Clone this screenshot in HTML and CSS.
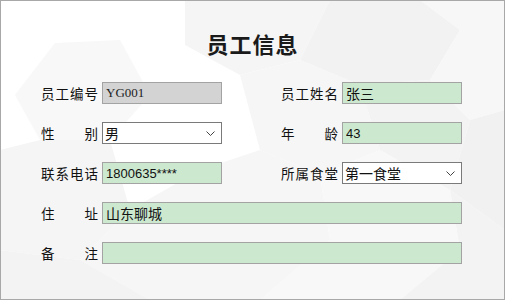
FILE: index.html
```html
<html>
<head>
    <link rel="stylesheet" href="styles.css">
</head>

<body>
    <div class="window">
        <!-- faint hexagon backdrop -->
        <svg class="backdrop" width="505" height="300" viewBox="0 0 505 300">
            <polygon points="185,0 330,0 300,60 240,75 185,45" fill="#f5f5f5" />
            <polygon points="330,0 420,0 460,30 430,80 360,85 300,60" fill="#f2f2f2" />
            <polygon points="420,0 505,0 505,110 470,120 430,80 460,30" fill="#f7f7f7" />
            <polygon points="300,60 360,85 380,150 320,175 260,150 240,75" fill="#f6f6f6" />
            <polygon points="360,85 430,80 470,120 450,190 380,150" fill="#f3f3f3" />
            <polygon points="470,120 505,110 505,230 450,190" fill="#f1f1f1" />
            <polygon points="55,43 120,40 150,95 110,140 40,140 15,95" fill="#f8f8f8" />
            <polygon points="0,150 40,140 110,140 130,210 80,260 0,250" fill="#f5f5f5" />
            <polygon points="130,210 200,170 260,150 320,175 330,240 260,300 150,300 80,260" fill="#f6f6f6" />
            <polygon points="320,175 380,150 450,190 460,250 400,300 260,300 330,240" fill="#f8f8f8" />
            <polygon points="450,190 505,230 505,300 400,300 460,250" fill="#f3f3f3" />
            <polygon points="0,250 80,260 150,300 0,300" fill="#f3f3f3" />
        </svg>

        <h1 class="title">员工信息</h1>

        <div class="form">
            <label class="field-label">员工编号</label>
            <input class="box box-readonly box-latin-serif" type="text" value="YG001" readonly />

            <label class="field-label">员工姓名</label>
            <input class="box" type="text" value="张三" />

            <label class="field-label">性别</label>
            <div class="select-wrap">
                <select class="pick">
                    <option>男</option>
                    <option>女</option>
                </select>
                <svg class="chevron" width="9" height="5" viewBox="0 0 9 5">
                    <polyline points="0.5,0.5 4.5,4.5 8.5,0.5" fill="none" stroke="#444" stroke-width="1" />
                </svg>
            </div>

            <label class="field-label">年龄</label>
            <input class="box box-latin" type="text" value="43" />

            <label class="field-label">联系电话</label>
            <input class="box box-latin" type="text" value="1800635****" />

            <label class="field-label">所属食堂</label>
            <div class="select-wrap">
                <select class="pick">
                    <option>第一食堂</option>
                    <option>第二食堂</option>
                </select>
                <svg class="chevron" width="9" height="5" viewBox="0 0 9 5">
                    <polyline points="0.5,0.5 4.5,4.5 8.5,0.5" fill="none" stroke="#444" stroke-width="1" />
                </svg>
            </div>

            <label class="field-label">住址</label>
            <input class="box wide" type="text" value="山东聊城" />

            <label class="field-label">备注</label>
            <input class="box wide" type="text" value="" />
        </div>
    </div>
</body>
</html>
```

FILE: styles.css
```css
body {
    margin: 0;
    font-family: "Noto Sans CJK SC", sans-serif;
    background-color: white;
}

.window {
    position: relative;
    width: 505px;
    height: 300px;
    box-sizing: border-box;
    border: 1px solid #a8a8a8;
    background-color: white;
    overflow: hidden;
}

.backdrop {
    position: absolute;
    left: -1px;
    top: -1px;
}

.title {
    position: relative;
    margin: 0;
    padding-top: 27px;
    height: 53px;
    box-sizing: border-box;
    text-align: center;
    font-size: 22px;
    line-height: 30px;
    font-weight: bold;
    color: #1a1a1a;
    letter-spacing: 1px;
}

.form {
    position: relative;
    display: grid;
    grid-template-columns: 60px 120px 120px 120px;
    grid-auto-rows: 22px;
    row-gap: 18px;
    margin-top: 28px;
    margin-left: 41px;
}

.field-label {
    justify-self: end;
    align-self: center;
    width: 57px;
    margin-right: 4px;
    white-space: nowrap;
    font-size: 13.5px;
    line-height: 18px;
    color: #111;
    text-align: justify;
    text-align-last: justify;
}

.box {
    width: 120px;
    height: 22px;
    box-sizing: border-box;
    margin: 0;
    padding: 0 3px;
    border: 1px solid #a3a3a3;
    background-color: #cce8cf;
    font-family: "Noto Sans CJK SC", sans-serif;
    font-size: 14px;
    color: #111;
    outline: none;
}

.box-readonly {
    background-color: #d3d3d3;
}

.box-latin {
    font-family: "Liberation Sans", "Noto Sans CJK SC", sans-serif;
    font-size: 13px;
}

.box-latin-serif {
    font-family: "Liberation Serif", "Noto Sans CJK SC", serif;
    font-size: 13px;
    color: #222;
}

.wide {
    grid-column: 2 / 5;
    width: 360px;
}

.select-wrap {
    position: relative;
    width: 120px;
    height: 22px;
}

.pick {
    appearance: none;
    -webkit-appearance: none;
    width: 120px;
    height: 22px;
    box-sizing: border-box;
    margin: 0;
    padding: 0 2px;
    border: 1px solid #7a7a7a;
    border-radius: 0;
    background-color: white;
    font-family: "Noto Sans CJK SC", sans-serif;
    font-size: 14px;
    color: #111;
    outline: none;
}

.chevron {
    position: absolute;
    right: 7px;
    top: 9px;
}
```
